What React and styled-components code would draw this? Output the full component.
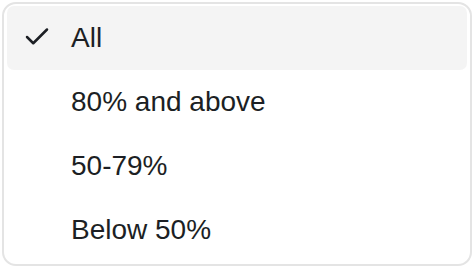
import React, { useState } from "react";
import styled, { createGlobalStyle } from "styled-components";

const options = ["All", "80% and above", "50-79%", "Below 50%"];

const GlobalStyle = createGlobalStyle`
	body {
		margin: 0;
		background: #ffffff;
		font-family: "Liberation Sans", Arial, sans-serif;
	}
`;

const CheckIcon = () => (
	<svg width="30" height="30" viewBox="0 0 24 24" fill="none" stroke="currentColor" strokeWidth="2" strokeLinecap="round" strokeLinejoin="round">
		<path d="M20 6 9 17l-5-5" />
	</svg>
);

const App = () => {
	const [selected, setSelected] = useState("All");

	return (
		<>
			<GlobalStyle />
			<Menu role="listbox">
				{options.map((opt) => (
					<Item key={opt} $active={opt === selected} onClick={() => setSelected(opt)}>
						<IconSlot>{opt === selected && <CheckIcon />}</IconSlot>
						<Label>{opt}</Label>
					</Item>
				))}
			</Menu>
		</>
	);
};

const Menu = styled.div`
	box-sizing: border-box;
	width: 470px;
	height: 264px;
	margin: 2px;
	padding: 2px 3px;
	border: 2px solid #e4e4e4;
	border-radius: 14px;
	background: #ffffff;
	display: flex;
	flex-direction: column;
`;

const Item = styled.div`
	height: 64px;
	flex: none;
	display: flex;
	align-items: center;
	border-radius: 7px;
	background: ${(p) => (p.$active ? "#f4f4f4" : "transparent")};
	color: #1c1f24;
	cursor: pointer;
`;

const IconSlot = styled.span`
	width: 64px;
	padding-left: 15px;
	box-sizing: border-box;
	display: flex;
	align-items: center;
	color: #1c1f24;
	margin-top: -2px;
`;

const Label = styled.span`
	font-size: 28px;
	line-height: 1;
`;

export default App;
